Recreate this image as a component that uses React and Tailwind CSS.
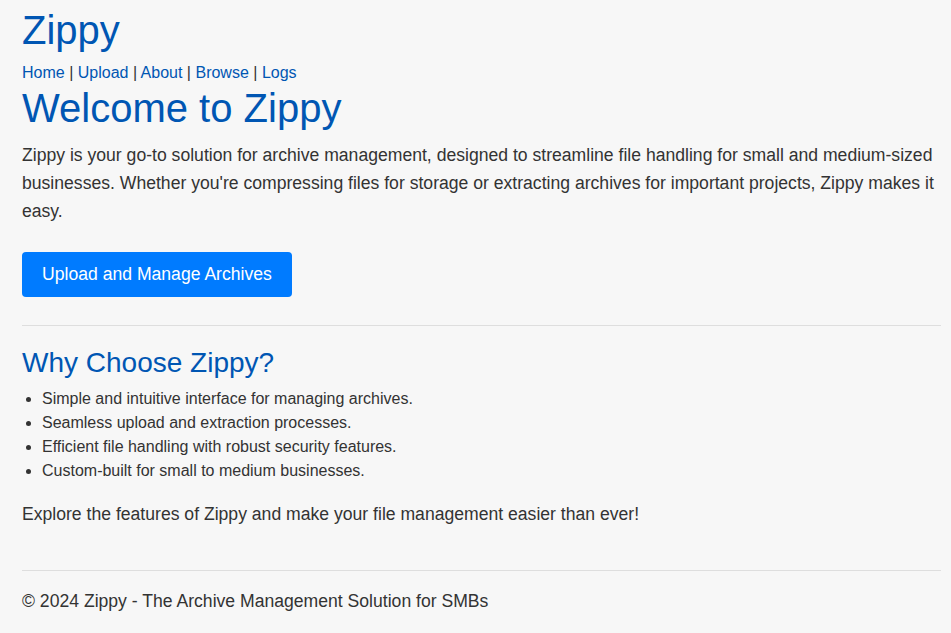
import React from 'react';

const navLinks = ['Home', 'Upload', 'About', 'Browse', 'Logs'];

const features = [
  'Simple and intuitive interface for managing archives.',
  'Seamless upload and extraction processes.',
  'Efficient file handling with robust security features.',
  'Custom-built for small to medium businesses.',
];

export default function App() {
  return (
    <div className="min-h-screen bg-[#f7f7f7] pl-[22px] pr-[10px] pt-[6px] font-['Liberation_Sans',Arial,sans-serif] text-[#333]">
      <header>
        <h1 className="text-[40px] leading-[48px] text-[#0056b3]">Zippy</h1>
        <nav className="mt-[7px] text-[16px] leading-[24px]">
          {navLinks.map((link, i) => (
            <span key={link}>
              <a href="#" className="text-[#0056b3]">{link}</a>
              {i < navLinks.length - 1 && ' | '}
            </span>
          ))}
        </nav>
      </header>

      <main>
        <h1 className="mt-[-1px] text-[40px] leading-[48px] text-[#0056b3]">Welcome to Zippy</h1>
        <p className="mt-[9px] text-[17.6px] leading-[28px]">
          Zippy is your go-to solution for archive management, designed to streamline file handling for small and medium-sized businesses. Whether you're compressing files for storage or extracting archives for important projects, Zippy makes it easy.
        </p>
        <button className="mt-[27px] h-[45px] rounded-[4px] bg-[#007bff] px-[20px] text-[17.6px] text-white">
          Upload and Manage Archives
        </button>

        <hr className="mt-[28px] border-t border-[#dedede]" />

        <h2 className="mt-[20px] text-[28px] leading-[34px] text-[#0056b3]">Why Choose Zippy?</h2>
        <ul className="mt-[7px] list-disc pl-[20px] text-[16px] leading-[24px]">
          {features.map((f) => (
            <li key={f}>{f}</li>
          ))}
        </ul>
        <p className="mt-[17px] text-[17.6px] leading-[28px]">
          Explore the features of Zippy and make your file management easier than ever!
        </p>
      </main>

      <footer className="mt-[42px]">
        <hr className="border-t border-[#dedede]" />
        <p className="mt-[16px] text-[17.6px] leading-[28px]">© 2024 Zippy - The Archive Management Solution for SMBs</p>
      </footer>
    </div>
  );
}
